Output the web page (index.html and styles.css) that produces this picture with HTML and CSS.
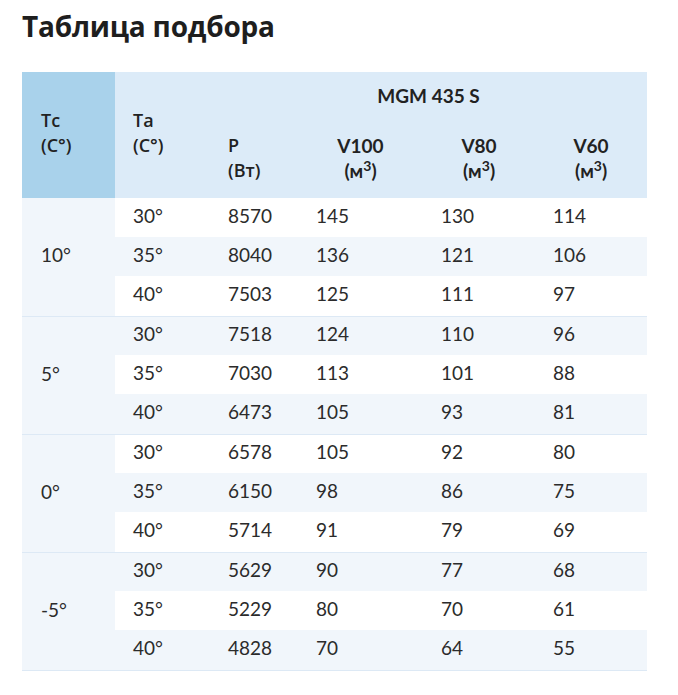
FILE: index.html
```html
<!DOCTYPE html>
<html lang="ru">
<head>
<meta charset="utf-8">
<link rel="stylesheet" href="styles.css">
</head>
<body>
<div class="page">
  <h1 class="title">Таблица подбора</h1>
  <table class="sel">
    <colgroup>
      <col class="c-tc"><col class="c-ta"><col class="c-p"><col class="c-v100"><col class="c-v"><col class="c-v">
    </colgroup>
    <thead>
      <tr class="h1row">
        <th rowspan="2" class="th-tc">Тс<br>(С°)</th>
        <th rowspan="2" class="th-ta">Та<br>(С°)</th>
        <th colspan="4" class="th-model">MGM 435 S</th>
      </tr>
      <tr class="h2row">
        <th class="th-p">Р<br>(Вт)</th>
        <th class="th-v">V100<br>(м<sup>3</sup>)</th>
        <th class="th-v">V80<br>(м<sup>3</sup>)</th>
        <th class="th-v">V60<br>(м<sup>3</sup>)</th>
      </tr>
    </thead>
    <tbody>
      <tr><td rowspan="3" class="tc">10°</td><td>30°</td><td>8570</td><td>145</td><td>130</td><td>114</td></tr>
      <tr><td>35°</td><td>8040</td><td>136</td><td>121</td><td>106</td></tr>
      <tr class="last"><td>40°</td><td>7503</td><td>125</td><td>111</td><td>97</td></tr>
      <tr><td rowspan="3" class="tc">5°</td><td>30°</td><td>7518</td><td>124</td><td>110</td><td>96</td></tr>
      <tr><td>35°</td><td>7030</td><td>113</td><td>101</td><td>88</td></tr>
      <tr class="last"><td>40°</td><td>6473</td><td>105</td><td>93</td><td>81</td></tr>
      <tr><td rowspan="3" class="tc">0°</td><td>30°</td><td>6578</td><td>105</td><td>92</td><td>80</td></tr>
      <tr><td>35°</td><td>6150</td><td>98</td><td>86</td><td>75</td></tr>
      <tr class="last"><td>40°</td><td>5714</td><td>91</td><td>79</td><td>69</td></tr>
      <tr><td rowspan="3" class="tc">-5°</td><td>30°</td><td>5629</td><td>90</td><td>77</td><td>68</td></tr>
      <tr><td>35°</td><td>5229</td><td>80</td><td>70</td><td>61</td></tr>
      <tr class="last"><td>40°</td><td>4828</td><td>70</td><td>64</td><td>55</td></tr>
    </tbody>
  </table>
</div>
</body>
</html>
```
FILE: styles.css
```css
html, body {
  margin: 0;
  padding: 0;
  background: #fff;
}
.page {
  padding: 6px 0 0 22px;
  font-family: Lato, "Open Sans", sans-serif;
  color: #2b2b2b;
}
.title {
  margin: 0 0 26px 0;
  font-family: "Open Sans", sans-serif;
  font-weight: 700;
  font-size: 28px;
  line-height: 40px;
  color: #1e1e1e;
  letter-spacing: -0.2px;
}
.sel {
  width: 625px;
  border-collapse: collapse;
  table-layout: fixed;
  font-size: 19px;
}
.c-tc { width: 93px; }
.c-ta { width: 95px; }
.c-p { width: 88px; }
.c-v100 { width: 125px; }
.c-v { width: 112px; }

.sel th {
  background: #dcebf8;
  font-weight: 700;
  text-align: left;
  vertical-align: middle;
  padding: 0 0 5px 18px;
  line-height: 25px;
  color: #222;
}
.sel .th-tc {
  background: #a9d2eb;
  padding-left: 19px;
  font-family: "Open Sans", sans-serif;
  font-weight: 600;
  font-size: 18px;
}
.sel .th-ta,
.sel .th-p {
  font-family: "Open Sans", sans-serif;
  font-weight: 600;
  font-size: 18px;
}
.sel .th-model {
  text-align: center;
  padding: 0 0 3px 0;
}
.sel .th-v {
  text-align: center;
  padding: 0 0 5px 0;
}
.sel sup {
  font-size: 14px;
  line-height: 0;
  vertical-align: 7px;
}
.h1row { height: 50px; }
.h2row { height: 76px; }

.sel tbody tr { height: 39px; }
.sel tbody tr.last { height: 40px; }
.sel td {
  padding: 0 0 3px 18px;
  vertical-align: middle;
  line-height: 24px;
  color: #2b2b2b;
}
.sel tbody tr.last td {
  padding-bottom: 4px;
}
.sel tbody tr:nth-child(even) td {
  background: #f1f6fb;
}
.sel td.tc {
  background: #f1f6fb;
  padding-left: 19px;
  border-bottom: 1px solid #dde9f5;
}
.sel tr.last td {
  border-bottom: 1px solid #dde9f5;
}
```
